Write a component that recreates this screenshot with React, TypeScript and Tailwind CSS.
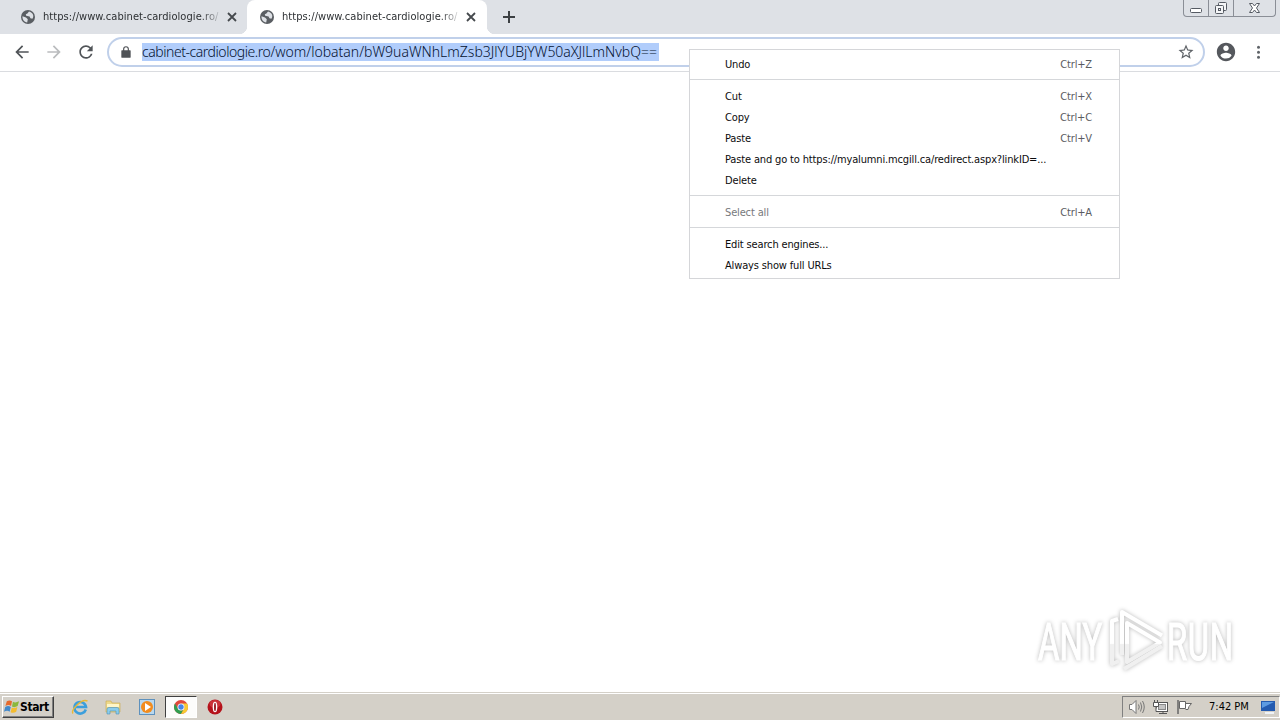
import type { ReactNode } from 'react';

interface TabProps {
  title: string;
  active?: boolean;
}

interface MenuEntry {
  label: string;
  shortcut?: string;
  disabled?: boolean;
}

const menuGroups: MenuEntry[][] = [
  [{ label: 'Undo', shortcut: 'Ctrl+Z' }],
  [
    { label: 'Cut', shortcut: 'Ctrl+X' },
    { label: 'Copy', shortcut: 'Ctrl+C' },
    { label: 'Paste', shortcut: 'Ctrl+V' },
    { label: 'Paste and go to https://myalumni.mcgill.ca/redirect.aspx?linkID=...' },
    { label: 'Delete' },
  ],
  [{ label: 'Select all', shortcut: 'Ctrl+A', disabled: true }],
  [{ label: 'Edit search engines...' }, { label: 'Always show full URLs' }],
];

function GlobeIcon() {
  return (
    <svg width="14" height="14" viewBox="0 0 14 14" className="shrink-0">
      <circle cx="7" cy="7" r="7" fill="#5a5e63" />
      <path d="M1.5 6.2 5 7.6 6.8 9.2 6.2 12.6C3.2 12 1.2 9.4 1.5 6.2ZM8 1.4 6.4 3.4 4.8 4.2 5.2 5.8 8.6 6.4 9.4 8.2 11.4 8.8C13.4 6 12 2.4 8 1.4Z" fill="#dee1e6" />
    </svg>
  );
}

function Tab({ title, active }: TabProps) {
  return (
    <div className={`relative flex h-[34px] w-60 items-center ${active ? 'rounded-t-lg bg-white pl-[13px]' : 'pl-[14px]'}`}>
      {active && (
        <>
          <span className="absolute bottom-0 -left-2 size-2 bg-[radial-gradient(circle_at_0_0,#dee1e6_8px,#fff_8.5px)]" />
          <span className="absolute bottom-0 -right-2 size-2 bg-[radial-gradient(circle_at_100%_0,#dee1e6_8px,#fff_8.5px)]" />
        </>
      )}
      <GlobeIcon />
      <span className="ml-2 w-[177px] whitespace-nowrap pt-px text-[11px] tracking-[0.07px] text-[#2d3033] [mask-image:linear-gradient(to_right,#000_158px,transparent_180px)]">
        {title}
      </span>
      <svg width="10" height="10" viewBox="0 0 10 10" className="ml-[7px] shrink-0">
        <path d="M1 1 9 9M9 1 1 9" stroke="#45494d" strokeWidth="1.8" />
      </svg>
    </div>
  );
}

function WindowControls() {
  return (
    <div className="flex h-[17px] w-[93px] rounded-b-[4px] border border-t-0 border-[#8a8e96]">
      <div className="flex w-[25px] justify-center border-r border-[#8a8e96]">
        <svg width="14" height="16" viewBox="0 0 14 16">
          <rect x="1.5" y="8.5" width="11" height="4" rx="1" fill="#fff" stroke="#555a63" />
        </svg>
      </div>
      <div className="flex w-[25px] justify-center border-r border-[#8a8e96]">
        <svg width="14" height="16" viewBox="0 0 14 16" fill="#f4f5f7" stroke="#555a63">
          <rect x="4.5" y="2.5" width="8" height="8" rx="1" />
          <rect x="1.5" y="5.5" width="8" height="8" rx="1" />
          <rect x="4.5" y="8.5" width="2" height="2" />
        </svg>
      </div>
      <div className="flex flex-1 justify-center">
        <svg width="14" height="16" viewBox="0 0 14 16">
          <path d="M1.5 3.5H4.5L6.5 6 8.5 3.5H11.5L8.5 8 11.5 12.5H8.5L6.5 10 4.5 12.5H1.5L4.5 8Z" fill="#fff" stroke="#555a63" />
        </svg>
      </div>
    </div>
  );
}

function TabStrip() {
  return (
    <div className="flex h-[34px] bg-[#dee1e6] pl-[7px]">
      <Tab title="https://www.cabinet-cardiologie.ro/" />
      <Tab title="https://www.cabinet-cardiologie.ro/" active />
      <div className="ml-4 flex items-center">
        <svg width="12" height="12" viewBox="0 0 12 12">
          <path d="M6 0V12M0 6H12" stroke="#3c4043" strokeWidth="2" />
        </svg>
      </div>
      <div className="ml-auto pr-1">
        <WindowControls />
      </div>
    </div>
  );
}

function Toolbar() {
  return (
    <div className="flex h-[38px] items-center border-b border-[#dadce0] bg-white pb-px pl-3">
      <svg width="20" height="20" viewBox="0 0 24 24" fill="#505458" className="shrink-0">
        <path d="M20 11H7.83l5.59-5.59L12 4l-8 8 8 8 1.41-1.41L7.83 13H20v-2z" />
      </svg>
      <svg width="20" height="20" viewBox="0 0 24 24" fill="#babcbe" className="ml-3 shrink-0">
        <path d="M12 4l-1.41 1.41L16.17 11H4v2h12.17l-5.58 5.59L12 20l8-8z" />
      </svg>
      <svg width="20" height="20" viewBox="0 0 24 24" fill="#505458" className="ml-3 shrink-0">
        <path d="M17.65 6.35A7.958 7.958 0 0 0 12 4c-4.42 0-7.99 3.58-7.99 8s3.57 8 7.99 8c3.73 0 6.84-2.55 7.73-6h-2.08A5.99 5.99 0 0 1 12 18c-3.31 0-6-2.69-6-6s2.69-6 6-6c1.66 0 3.14.69 4.22 1.78L13 11h7V4l-2.35 2.35z" />
      </svg>
      <div className="ml-[11px] flex h-[30px] w-[1098px] shrink-0 items-center rounded-full border-2 border-[#c0d0ea] bg-white pr-[9px] pl-[10px]">
        <svg width="14" height="14" viewBox="0 0 24 24" fill="#505357" className="shrink-0">
          <path d="M19 9h-2V7A5 5 0 0 0 7 7v2H5a1 1 0 0 0-1 1v10.5a1.5 1.5 0 0 0 1.5 1.5h13a1.5 1.5 0 0 0 1.5-1.5V10a1 1 0 0 0-1-1zM9 9V7a3 3 0 0 1 6 0v2z" />
        </svg>
        <span className="ml-[9px] h-[18px] w-[517px] bg-[#b1cdfb] font-['Noto_Sans',sans-serif] text-[14px] leading-[18px] font-light whitespace-nowrap text-[#051230]">
          <span className="tracking-[-0.45px]">cabinet-cardiologie.ro</span>
          /wom/lobatan/bW9uaWNhLmZsb3JlYUBjYW50aXJlLmNvbQ==
        </span>
        <svg width="18" height="18" viewBox="0 0 24 24" fill="#5f6368" className="-mr-px ml-auto shrink-0">
          <path d="M22 9.24l-7.19-.62L12 2 9.19 8.63 2 9.24l5.46 4.73L5.82 21 12 17.27 18.18 21l-1.63-7.03L22 9.24zM12 15.4l-3.76 2.27 1-4.28-3.32-2.88 4.38-.38L12 6.1l1.71 4.04 4.38.38-3.32 2.88 1 4.28L12 15.4z" />
        </svg>
      </div>
      <svg width="22" height="22" viewBox="0 0 24 24" fill="#55585d" className="ml-[10px] shrink-0">
        <path d="M12 2C6.48 2 2 6.48 2 12s4.48 10 10 10 10-4.48 10-10S17.52 2 12 2zm0 3c1.66 0 3 1.34 3 3s-1.34 3-3 3-3-1.34-3-3 1.34-3 3-3zm0 14.2a7.2 7.2 0 0 1-6-3.22c.03-1.99 4-3.08 6-3.08 1.99 0 5.97 1.09 6 3.08a7.2 7.2 0 0 1-6 3.22z" />
      </svg>
      <svg width="20" height="20" viewBox="0 0 20 20" fill="#5f6368" className="ml-[11px] shrink-0">
        <circle cx="10.5" cy="5.3" r="1.5" />
        <circle cx="10.5" cy="10.3" r="1.5" />
        <circle cx="10.5" cy="15.3" r="1.5" />
      </svg>
    </div>
  );
}

function ContextMenu() {
  return (
    <div className="absolute top-[49px] left-[689px] h-[230px] w-[431px] border border-[#d5d6d9] bg-white pt-1 text-[11px] leading-[21px] tracking-[-0.15px] text-[#0c0c0d]">
      {menuGroups.map((group, i) => (
        <div key={i}>
          {i > 0 && <div className="mt-1 mb-1.5 h-px bg-[#d5d7da]" />}
          {group.map((entry) => (
            <div
              key={entry.label}
              className={`flex h-[21px] justify-between pr-[27px] pl-[35px] whitespace-nowrap ${entry.disabled ? 'text-[#77797c]' : ''}`}
            >
              <span>{entry.label}</span>
              {entry.shortcut && <span className="text-[#5a5c5f]">{entry.shortcut}</span>}
            </div>
          ))}
        </div>
      ))}
    </div>
  );
}

function Watermark() {
  return (
    <svg width="230" height="80" viewBox="0 0 230 80" className="absolute top-[601px] left-[1030px] drop-shadow-[0_0_2px_rgba(0,0,0,0.28)]">
      <defs>
        <linearGradient id="fade" gradientUnits="userSpaceOnUse" x1="0" y1="10" x2="0" y2="70">
          <stop offset="0.54" stopColor="#fff" />
          <stop offset="0.56" stopColor="#f0f0f0" />
        </linearGradient>
      </defs>
      <g fill="url(#fade)" stroke="url(#fade)" strokeWidth="1.2" fontFamily="Roboto" fontSize="52">
        <text transform="translate(8 59) scale(0.63 1)" textLength="102">ANY</text>
        <text transform="translate(137 59) scale(0.63 1)" textLength="105">RUN</text>
      </g>
      <g fill="none" stroke="url(#fade)" strokeWidth="4" strokeLinejoin="round">
        <path d="M92 54V11L132 34.5" />
        <path d="M97 22 130 41.5 97 61Z" />
        <path d="M88 18 82 20V63L89 60" />
        <path d="M94 68 132 45" />
      </g>
    </svg>
  );
}

function QuickLaunch({ children }: { children: ReactNode }) {
  return <div className="flex h-[22px] w-[34px] items-center justify-center">{children}</div>;
}

function StartButton() {
  return (
    <div className="flex h-[22px] w-[52px] items-center border border-t-white border-r-[#404040] border-b-[#404040] border-l-white pl-px shadow-[inset_-1px_-1px_0_#808080]">
      <svg width="16" height="16" viewBox="0 0 17 16" className="shrink-0">
        <path d="M3 2Q6 0 8.5 2L7.5 7Q5 5 1.5 7Z" fill="#e66a2c" />
        <path d="M9.5 2.5Q12 4 16 2L14.5 7Q11 9 8.5 7.5Z" fill="#8bb83c" />
        <path d="M1.3 8Q4.5 6 7.2 8L6 13Q3.5 11 0 13Z" fill="#4389ca" />
        <path d="M8.3 8.5Q11 10 14.2 8L13 13Q10 15 7 13.5Z" fill="#f4bc2f" />
      </svg>
      <span className="text-[12px] font-bold tracking-[-0.4px] text-black">Start</span>
    </div>
  );
}

function Taskbar() {
  return (
    <div className="absolute top-[692px] left-0 flex h-7 w-full items-start border-t border-[#d4d0c8] bg-[#d4d0c8] pt-[3px] pl-0.5 shadow-[inset_0_1px_0_#fff]">
      <StartButton />
      <div className="ml-[9px] flex">
        <QuickLaunch>
          <svg width="18" height="18" viewBox="0 0 18 18" fill="none">
            <path d="M14.8 11.5A5.8 5.8 0 1 1 15 9H5" stroke="#3c9fdc" strokeWidth="2.6" />
            <path d="M2 15.5Q0 13 6 7T16.5 3" stroke="#e9b935" strokeWidth="1.4" />
          </svg>
        </QuickLaunch>
        <QuickLaunch>
          <svg width="18" height="18" viewBox="0 0 18 18" className="-ml-0.5">
            <path d="M2 3H7L8 5H16V14H2Z" fill="#edd98c" stroke="#c9a84a" strokeWidth="0.6" />
            <path d="M3 6H15V9H3Z" fill="#fff6c8" />
            <path d="M3 16V11Q3 9.5 5 9.5H13Q15 9.5 15 11V16H12V13H6V16Z" fill="#8accec" stroke="#4e91b6" strokeWidth="0.6" />
          </svg>
        </QuickLaunch>
        <QuickLaunch>
          <svg width="18" height="18" viewBox="0 0 18 18" className="-ml-0.5">
            <rect x="1.5" y="1.5" width="15" height="15" fill="#b9d8ee" stroke="#5e91bd" />
            <circle cx="9" cy="9" r="6" fill="#f28c1e" />
            <path d="M7 5 13 9 7 13Z" fill="#fff" />
          </svg>
        </QuickLaunch>
        <div className="flex h-[22px] w-8 items-center justify-center border border-t-[#404040] border-r-white border-b-white border-l-[#404040] bg-[#fcfcfb]">
          <svg width="14" height="14" viewBox="0 0 14 14">
            <circle cx="7" cy="7" r="7" fill="#e0483b" />
            <path d="M.94 3.5A7 7 0 0 0 7 14L10 8.7A3.5 3.5 0 0 1 4 8.7Z" fill="#2f9e50" />
            <path d="M7 14A7 7 0 0 0 13.06 3.5H7A3.5 3.5 0 0 1 10 8.7Z" fill="#f7cb32" />
            <circle cx="7" cy="7" r="3.5" fill="#fff" />
            <circle cx="7" cy="7" r="2.7" fill="#4585e8" />
          </svg>
        </div>
        <QuickLaunch>
          <svg width="16" height="16" viewBox="0 0 16 16" className="ml-px">
            <circle cx="8" cy="8" r="7.5" fill="#b5121b" />
            <ellipse cx="8" cy="5" rx="5.5" ry="4" fill="#da4a4f" opacity="0.6" />
            <ellipse cx="8" cy="8" rx="2.3" ry="5.3" fill="#fff" />
            <ellipse cx="8" cy="8" rx="0.9" ry="4.3" fill="#8e0d14" />
          </svg>
        </QuickLaunch>
      </div>
      <div className="ml-auto flex h-[22px] w-[158px] items-center border border-t-[#808080] border-r-white border-b-white border-l-[#808080] pl-[5px]">
        <svg width="18" height="16" viewBox="0 0 18 16" fill="none" stroke="#777">
          <path d="M1.5 5.5H4L8 1.5V14.5L4 10.5H1.5Z" fill="#fff" />
          <path d="M10.5 5.5Q12 8 10.5 10.5M12.5 3.5Q15 8 12.5 12.5M14.5 2Q18 8 14.5 14" />
        </svg>
        <svg width="17" height="16" viewBox="0 0 17 16" fill="none" stroke="#555" className="ml-1.5">
          <rect x="4.5" y="3.5" width="11" height="9" fill="#fff" />
          <rect x="6.5" y="5.5" width="7" height="5" fill="#c4c4c4" stroke="#888" />
          <path d="M7 14.5H15M11 12V14" />
          <path d="M1.5 3.5H6.5V7.5H1.5ZM2.5 1V3M5.5 1V3M4 8V12.5H6" fill="#fff" />
        </svg>
        <svg width="17" height="16" viewBox="0 0 17 16" fill="#fff" stroke="#666" className="ml-[7px]">
          <path d="M2 1V15" strokeWidth="1.5" />
          <path d="M3.5 2.5H9.5V9.5H3.5ZM9.5 4.5H15.5L13 7.5 12 10.5H9.5" />
        </svg>
        <span className="ml-4 text-[11px] whitespace-nowrap text-black">7:42 PM</span>
        <svg width="16" height="16" viewBox="0 0 16 16" className="mr-[3px] ml-auto shrink-0">
          <path d="M1 2H15V12H1Z" fill="#245bb0" />
          <path d="M2 3H14L2 9Z" fill="#5d9be2" />
          <path d="M5 13H14V15H5Z" fill="#eef3f8" />
        </svg>
      </div>
    </div>
  );
}

export default function App() {
  return (
    <div className="relative h-[720px] w-[1280px] overflow-hidden bg-white font-['DejaVu_Sans_Condensed','DejaVu_Sans',sans-serif]">
      <TabStrip />
      <Toolbar />
      <ContextMenu />
      <Watermark />
      <Taskbar />
    </div>
  );
}
